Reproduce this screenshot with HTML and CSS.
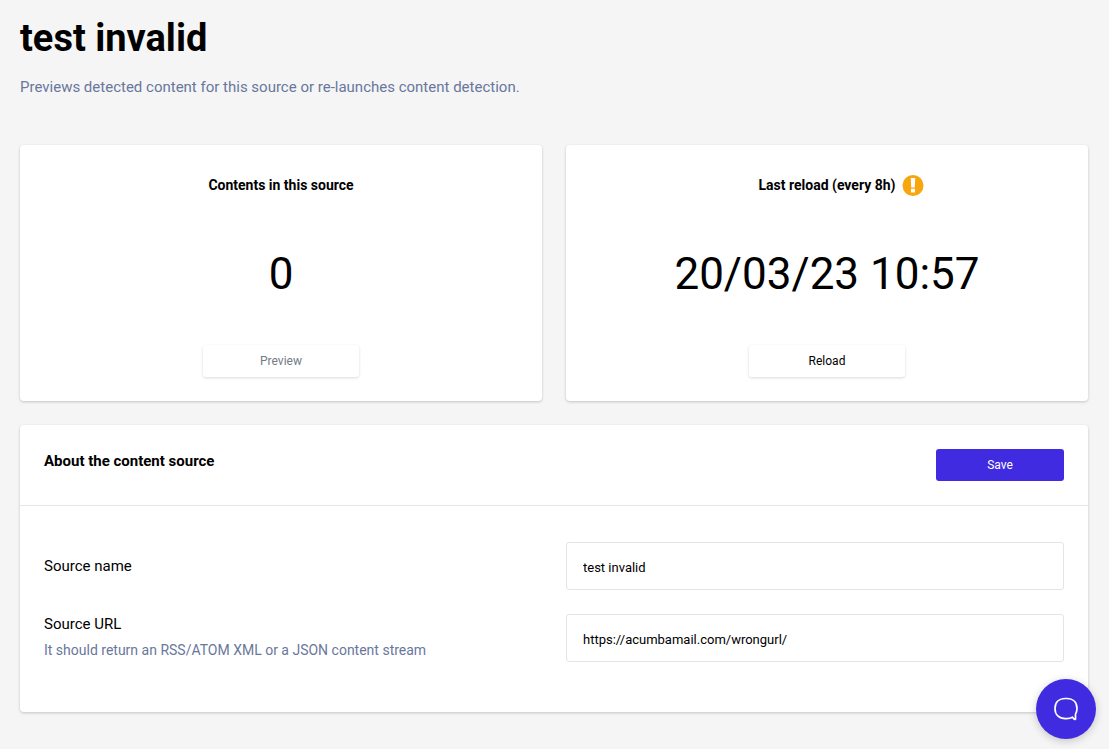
FILE: index.html
```html
<!DOCTYPE html>
<html lang="en">
<head>
<meta charset="utf-8">
<meta name="viewport" content="width=device-width, initial-scale=1">
<title>test invalid</title>
<link rel="stylesheet" href="styles.css">
</head>
<body>
<main class="page">
  <header class="page-header">
    <h1 class="page-title">test invalid</h1>
    <p class="page-intro">Previews detected content for this source or re-launches content detection.</p>
  </header>

  <div class="stats">
    <section class="card stat">
      <div class="stat-head"><h2 class="stat-title">Contents in this source</h2></div>
      <p class="stat-value">0</p>
      <button class="button button-light" type="button" disabled>Preview</button>
    </section>
    <section class="card stat">
      <div class="stat-head">
        <h2 class="stat-title">Last reload (every 8h)</h2>
        <svg class="alert-icon" viewBox="0 0 22 22" role="img" aria-label="Warning">
          <circle cx="11" cy="11.500" r="10.500" fill="#f7a60f"/>
          <path d="M8.800 4h4.400l-.4 9.500H9.200zM9 14.800h4v3.700H9z" fill="#fff"/>
        </svg>
      </div>
      <p class="stat-value">20/03/23 10:57</p>
      <button class="button button-light" type="button">Reload</button>
    </section>
  </div>

  <form class="card about">
    <div class="about-head">
      <h2 class="about-title">About the content source</h2>
      <button class="button button-primary" type="button">Save</button>
    </div>
    <div class="about-body">
      <div class="field">
        <div class="field-text">
          <label class="field-label" for="source-name">Source name</label>
        </div>
        <input class="field-input" id="source-name" type="text" value="test invalid">
      </div>
      <div class="field">
        <div class="field-text">
          <label class="field-label" for="source-url">Source URL</label>
          <p class="field-hint" id="url-hint">It should return an RSS/ATOM XML or a JSON content stream</p>
        </div>
        <input class="field-input" id="source-url" type="text" value="https://acumbamail.com/wrongurl/" aria-describedby="url-hint">
      </div>
    </div>
  </form>
</main>

<button class="chat" type="button" aria-label="Open chat">
  <svg class="chat-icon" viewBox="0 0 28 28" aria-hidden="true">
    <path d="M20.500 22.100C18.900 23.100 16.900 23.600 14.600 23.600h-1.200C7 23.600 3 19.800 3 13.600S7 3.500 13.400 3.500h1.200C21 3.500 25 7.300 25 13.600c0 2.200-.5 4-1.500 5.500v5.200c-1.200.1-2.200-.6-3-2.200z" fill="none" stroke="#fff" stroke-width="1.700" stroke-linejoin="round"/>
  </svg>
</button>
</body>
</html>
```

FILE: styles.css
```css
* {
  box-sizing: border-box;
}

body {
  margin: 0;
  background: #f5f5f5;
  color: #000;
  font-family: Roboto, "Liberation Sans", sans-serif;
  font-size: 15px;
}

h1,
h2,
p {
  margin: 0;
}

.page {
  padding: 12px 21px 36px 20px;
}

.page-header {
  margin-bottom: 46px;
}

.page-title {
  font-size: 38px;
  font-weight: 700;
  line-height: 52px;
}

.page-intro {
  margin-top: 11px;
  color: #69779c;
  font-size: 15px;
  line-height: 24px;
}

.card {
  background: #fff;
  border-radius: 4px;
  box-shadow: 0 1px 3px rgba(0, 0, 0, 0.2);
}

.stats {
  display: grid;
  grid-template-columns: 1fr 1fr;
  gap: 24px;
  margin-bottom: 24px;
}

.stat {
  display: flex;
  flex-direction: column;
  align-items: center;
  padding: 24px;
}

.stat-head {
  position: relative;
  display: flex;
  align-items: center;
  height: 32px;
}

.stat-title {
  font-size: 14px;
  font-weight: 700;
}

.alert-icon {
  position: absolute;
  left: 100%;
  width: 22px;
  height: 22px;
  margin-left: 6px;
}

.stat-value {
  padding-top: 2px;
  font-size: 44px;
  line-height: 142px;
}

.button {
  height: 32px;
  padding: 0 16px;
  border: 0;
  border-radius: 3px;
  font-family: inherit;
  font-size: 12px;
}

.button-light {
  width: 156px;
  background: #fff;
  color: #000;
  box-shadow: 0 1px 3px rgba(0, 0, 0, 0.15);
}

.button-light:disabled {
  color: #737b84;
}

.button-primary {
  width: 128px;
  background: #412be0;
  color: #fff;
}

.about-head {
  display: flex;
  align-items: flex-start;
  justify-content: space-between;
  padding: 24px;
  border-bottom: 1px solid #e4e6e8;
}

.about-title {
  font-size: 15px;
  font-weight: 700;
  line-height: 24px;
}

.about-body {
  display: grid;
  gap: 22px;
  padding: 36px 24px 48px;
}

.field {
  display: grid;
  grid-template-columns: 1fr 1fr;
  align-items: center;
  gap: 24px;
}

.field-label {
  display: block;
  font-size: 15px;
  line-height: 24px;
}

.field-hint {
  color: #69779c;
  font-size: 14px;
  line-height: 28px;
}

.field-input {
  width: 100%;
  height: 48px;
  padding: 2px 16px 0;
  border: 1px solid #e1e5ea;
  border-radius: 3px;
  background: #fff;
  color: #000;
  font-family: inherit;
  font-size: 13px;
}

.chat {
  position: fixed;
  right: 13px;
  bottom: 10px;
  display: grid;
  place-items: center;
  width: 60px;
  height: 60px;
  padding: 0;
  border: 0;
  border-radius: 50%;
  background: #412be0;
  box-shadow: 0 2px 8px rgba(0, 0, 0, 0.2);
}

.chat-icon {
  width: 28px;
  height: 28px;
}
```
